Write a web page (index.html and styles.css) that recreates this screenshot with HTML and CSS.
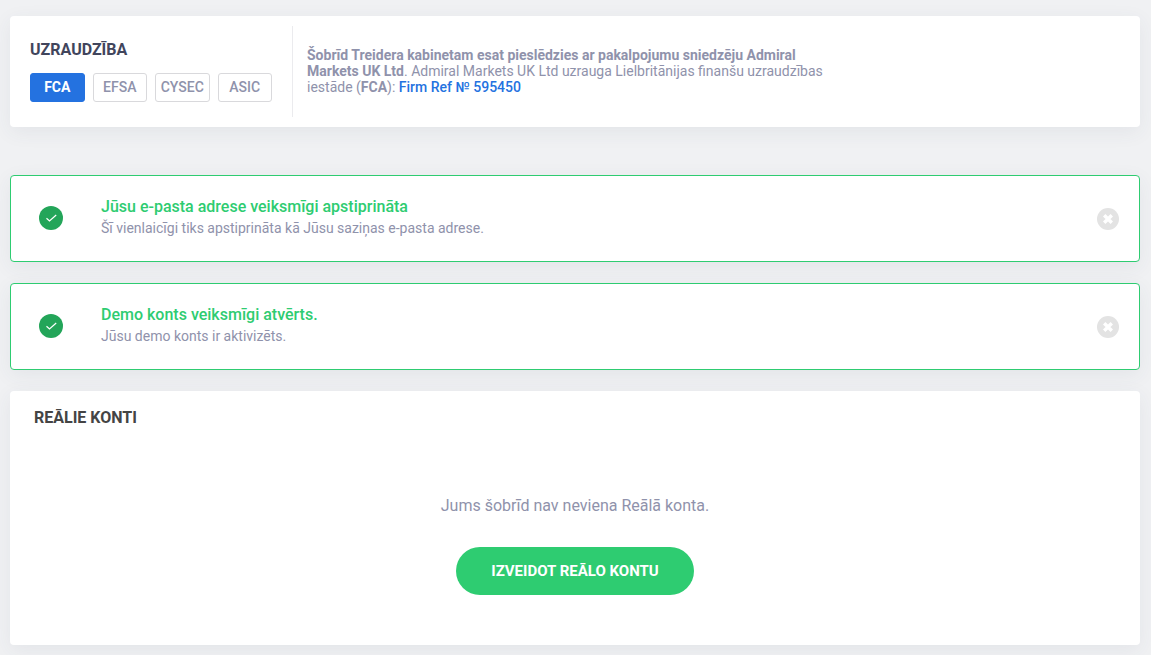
FILE: index.html
```html
<!DOCTYPE html>
<html lang="lv">
<head>
  <meta charset="UTF-8">
  <meta name="viewport" content="width=device-width, initial-scale=1.0">
  <title>Treidera kabinets</title>
  <link rel="stylesheet" href="styles.css">
</head>
<body>

  <main class="page">
    <section class="card regulation">
      <div class="regulation-switch">
        <h2 class="title title-dark">UZRAUDZĪBA</h2>
        <div class="regulators">
          <button type="button" class="regulator active">FCA</button>
          <button type="button" class="regulator">EFSA</button>
          <button type="button" class="regulator">CYSEC</button>
          <button type="button" class="regulator">ASIC</button>
        </div>
      </div>
      <p class="regulation-text">
        <b>Šobrīd Treidera kabinetam esat pieslēdzies ar pakalpojumu sniedzēju Admiral Markets UK Ltd</b>. Admiral Markets UK Ltd uzrauga Lielbritānijas finanšu uzraudzības iestāde (<b>FCA</b>): <a href="#">Firm Ref № 595450</a>
      </p>
    </section>

    <div class="card alert">
      <svg class="alert-icon" viewBox="0 0 24 24" aria-hidden="true">
        <circle cx="12" cy="12" r="12" fill="#23a559"/>
        <path d="M7.5 12.2l3 2.8 6.7-6" fill="none" stroke="#fff" stroke-width="1.2"/>
      </svg>
      <div class="alert-body">
        <h3 class="alert-title">Jūsu e-pasta adrese veiksmīgi apstiprināta</h3>
        <p class="alert-text">Šī vienlaicīgi tiks apstiprināta kā Jūsu saziņas e-pasta adrese.</p>
      </div>
      <button type="button" class="alert-close" aria-label="Aizvērt">
        <svg viewBox="0 0 22 22" aria-hidden="true">
          <circle cx="11" cy="11" r="11" fill="#e3e3e3"/>
          <path d="M7.2 7.2l7.6 7.6M14.8 7.2l-7.6 7.6" stroke="#fff" stroke-width="3.4"/>
        </svg>
      </button>
    </div>

    <div class="card alert">
      <svg class="alert-icon" viewBox="0 0 24 24" aria-hidden="true">
        <circle cx="12" cy="12" r="12" fill="#23a559"/>
        <path d="M7.5 12.2l3 2.8 6.7-6" fill="none" stroke="#fff" stroke-width="1.2"/>
      </svg>
      <div class="alert-body">
        <h3 class="alert-title">Demo konts veiksmīgi atvērts.</h3>
        <p class="alert-text">Jūsu demo konts ir aktivizēts.</p>
      </div>
      <button type="button" class="alert-close" aria-label="Aizvērt">
        <svg viewBox="0 0 22 22" aria-hidden="true">
          <circle cx="11" cy="11" r="11" fill="#e3e3e3"/>
          <path d="M7.2 7.2l7.6 7.6M14.8 7.2l-7.6 7.6" stroke="#fff" stroke-width="3.4"/>
        </svg>
      </button>
    </div>

    <section class="card accounts">
      <h2 class="title">REĀLIE KONTI</h2>
      <div class="accounts-empty">
        <p class="accounts-text">Jums šobrīd nav neviena Reālā konta.</p>
        <button type="button" class="accounts-button">IZVEIDOT REĀLO KONTU</button>
      </div>
    </section>
  </main>

</body>
</html>
```
FILE: styles.css
```css
* {
  box-sizing: border-box;
}

body {
  margin: 0;
  background-color: #f0f1f3;
  color: #8f92ab;
  font-family: Roboto, Arial, sans-serif;
  font-size: 14px;
  line-height: 16px;
}

h2,
h3,
p {
  margin: 0;
}

button {
  font-family: inherit;
  cursor: pointer;
}

a {
  color: #2472e0;
  font-weight: 500;
  text-decoration: none;
}

.page {
  padding: 16px 11px 10px 10px;
}

.card {
  margin-bottom: 21px;
  border-radius: 4px;
  background-color: #fff;
  box-shadow: 0 5px 20px rgba(60, 70, 100, 0.07);
}

.card:last-child {
  margin-bottom: 0;
}

.title {
  color: #444;
  font-size: 16px;
  font-weight: 700;
  line-height: 18px;
}

.title-dark {
  color: #41455c;
}

/* Regulation */
.regulation {
  display: flex;
  align-items: stretch;
  margin-bottom: 48px;
  padding: 10px 0;
}

.regulation-switch {
  flex: none;
  padding: 15px 20px 15px;
  border-right: 1px solid #ebebee;
}

.regulators {
  display: grid;
  grid-template-columns: repeat(4, 1fr);
  gap: 8px;
  width: 242px;
  margin-top: 14px;
}

.regulator {
  height: 29px;
  padding: 0 0 1px;
  border: 1px solid #d9d9dc;
  border-radius: 3px;
  background-color: #fff;
  color: #8f92ab;
  font-size: 14px;
  font-weight: 500;
}

.regulator.active {
  border-color: #2472e0;
  background-color: #2472e0;
  color: #fff;
  font-weight: 700;
}

.regulation-text {
  align-self: center;
  max-width: 565px;
  padding: 0 14px 2px;
}

/* Alerts */
.alert {
  display: flex;
  align-items: center;
  padding: 20px 20px 22px 28px;
  border: 1px solid #2ecc71;
}

.alert-icon {
  flex: none;
  width: 24px;
  height: 24px;
}

.alert-body {
  flex: 1;
  padding-left: 38px;
}

.alert-title {
  color: #2ecc71;
  font-size: 16px;
  font-weight: 500;
  line-height: 21px;
}

.alert-text {
  line-height: 22px;
}

.alert-close {
  flex: none;
  width: 22px;
  margin-top: 2px;
  padding: 0;
  border: none;
  background: none;
}

.alert-close svg {
  display: block;
  width: 22px;
  height: 22px;
}

/* Accounts */
.accounts {
  padding: 18px 24px 50px;
}

.accounts-empty {
  display: flex;
  flex-direction: column;
  align-items: center;
  gap: 32px;
  padding-top: 70px;
}

.accounts-text {
  font-size: 16px;
  line-height: 18px;
}

.accounts-button {
  height: 48px;
  padding: 0 35px;
  border: none;
  border-radius: 24px;
  background-color: #2ecc71;
  color: #fff;
  font-size: 15px;
  font-weight: 700;
}
```
